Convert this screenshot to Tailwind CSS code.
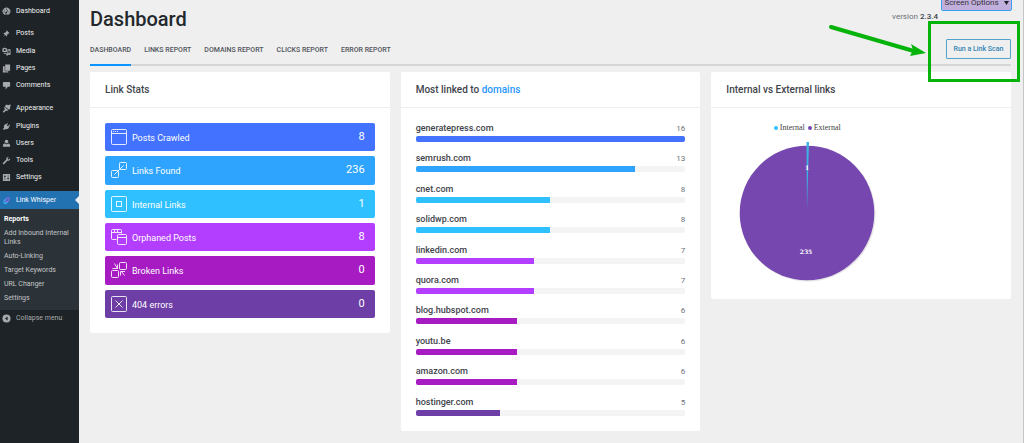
<!DOCTYPE html>
<html lang="en">
<head>
<meta charset="utf-8">
<meta name="viewport" content="width=device-width, initial-scale=1">
<title>Dashboard</title>
<script src="https://cdn.jsdelivr.net/npm/@tailwindcss/browser@4"></script>
</head>
<body class="relative flex min-h-screen overflow-x-hidden bg-[#efefef] font-['Roboto',sans-serif] text-[#3f444b]">

<aside class="w-[79px] shrink-0 bg-[#1d2327] pt-[3px] text-[7px] leading-[9px] text-[#f0f0f1]">
  <nav aria-label="Main menu">
    <ul>
      <li><a href="#" class="flex h-[17px] items-center gap-[5px] pl-[2px]">
        <svg class="size-[9px] fill-[#a7aaad]" viewBox="0 0 20 20"><path fill-rule="evenodd" d="M4 16a8.500 8.500 0 1 1 12 0c-.5.6-1 .9-1.500.9h-9C5 16.900 4.500 16.600 4 16zM9 4v2h2V4zM5 6v2h2V6zM3.500 10v2h2v-2zM14.500 10v2h2v-2zM14 5l-5 6a2 2 0 1 0 2 2z"/></svg>Dashboard</a></li>
      <li class="mt-[5px]"><a href="#" class="flex h-[17px] items-center gap-[5px] pl-[2px]">
        <svg class="size-[9px] fill-[#a7aaad]" viewBox="0 0 20 20"><path d="M10.400 3l6.500 6.500c-1 .8-2.200.9-3 .6l-2.600 2.700c.5 1.500.2 3-.7 4l-3.300-3.400L2 18l4.500-5.400-3.300-3.300c1-.9 2.500-1.200 4-.7L9.800 6c-.3-.9-.2-2.200.6-3z"/></svg>Posts</a></li>
      <li><a href="#" class="flex h-[18px] items-center gap-[5px] pl-[2px]">
        <svg class="size-[9px] fill-[#a7aaad]" viewBox="0 0 20 20"><path fill-rule="evenodd" d="M1 3h2l1-1.500h3L8 3h3v8H1zM6 4.500a2.300 2.300 0 1 0 0 4.600 2.300 2.300 0 0 0 0-4.600zM12 5h7v10.500a2.500 2.500 0 1 1-2-2.400V8h-3v8.500a2.500 2.500 0 1 1-2-2.400zM4 13h5v2H4z"/></svg>Media</a></li>
      <li><a href="#" class="flex h-[17px] items-center gap-[5px] pl-[2px]">
        <svg class="size-[9px] fill-[#a7aaad]" viewBox="0 0 20 20"><path d="M7 1h11v14H7zM2 5h4v11h8v3H2z"/></svg>Pages</a></li>
      <li><a href="#" class="flex h-[17px] items-center gap-[5px] pl-[2px]">
        <svg class="size-[9px] fill-[#a7aaad]" viewBox="0 0 20 20"><path d="M4 2h12c1 0 2 1 2 2v7c0 1-1 2-2 2h-3l-5 6v-6H4c-1 0-2-1-2-2V4c0-1 1-2 2-2z"/></svg>Comments</a></li>
      <li class="mt-[6px]"><a href="#" class="flex h-[17px] items-center gap-[5px] pl-[2px]">
        <svg class="size-[9px] fill-[#a7aaad]" viewBox="0 0 20 20"><path d="M9 2l2-1 2 2 5-2 1.500 1.500-2 5 1 2-3 3L6 5zM5.500 6l8.500 8-3 1.500-2-1-4.500 4.500c-1 .8-3.500-1.500-2.500-2.500L6.500 12l-1.500-3z"/></svg>Appearance</a></li>
      <li><a href="#" class="flex h-[18px] items-center gap-[5px] pl-[2px]">
        <svg class="size-[9px] fill-[#a7aaad]" viewBox="0 0 20 20"><path d="M13.100 4.400L10.500 7l2.500 2.500L16 6.600c1-.9 2.500.6 1.500 1.500l-3 3 1.200 1.200c-2 3-5.500 4.500-8.500 3L4.500 18 2 15.500l2.700-2.700c-1.500-3 0-6.500 3-8.500L9 5.500 11.600 3c1-1 2.500.4 1.500 1.400z"/></svg>Plugins</a></li>
      <li><a href="#" class="flex h-[17px] items-center gap-[5px] pl-[2px]">
        <svg class="size-[9px] fill-[#a7aaad]" viewBox="0 0 20 20"><circle cx="10" cy="5.500" r="4"/><path d="M2 17v-3c0-3 3-4 5-4l3 2 3-2c2 0 5 1 5 4v3z"/></svg>Users</a></li>
      <li><a href="#" class="flex h-[17px] items-center gap-[5px] pl-[2px]">
        <svg class="size-[9px] fill-[#a7aaad]" viewBox="0 0 20 20"><path d="M16.700 9.300c-1.300 1.300-3.200 1.600-4.800 1L5 17.500c-.9 1-2 1-2.700.2-.8-.8-.8-1.900.2-2.700l7.200-7c-.7-1.600-.3-3.500 1-4.700 1.200-1.300 3-1.600 4.600-1L12.500 5l.5 2.200 2.200.5 2.700-2.700c.6 1.500.1 3.100-1.200 4.300z"/></svg>Tools</a></li>
      <li><a href="#" class="flex h-[17px] items-center gap-[5px] pl-[2px]">
        <svg class="size-[9px] fill-[#a7aaad]" viewBox="0 0 20 20"><path fill-rule="evenodd" d="M2 2h16v16H2zM6 4v3H4.500v2H6v7h1V9h1.500V7H7V4zM13 4v7h-1.500v2H13v3h1v-3h1.500v-2H14V4z"/></svg>Settings</a></li>
      <li class="mt-[5px]">
        <a href="#" class="relative flex h-[18px] items-center gap-[5px] bg-[#2271b1] pl-[2px] text-white">
          <svg class="size-[9px]" viewBox="0 0 20 20" fill="none" stroke-width="2.500" stroke-linecap="round"><path stroke="#35b8f5" d="M8 7l-3 3.500c-3 4 2 8 5.500 4.500l2-2.500"/><path stroke="#8a6be0" d="M12 13l3-4c3-4-1-7-4-4L8 9c-2 3 1 5 3 3"/></svg>Link Whisper
          <span class="absolute right-0 top-[5px] border-y-4 border-r-4 border-y-transparent border-r-[#efefef]"></span>
        </a>
        <ul class="flex flex-col gap-[5px] bg-[#2c3338] px-[4px] pb-[7px] pt-[6px] text-[#c3c4c7]">
          <li><a href="#" class="block font-bold text-white">Reports</a></li>
          <li><a href="#" class="block">Add Inbound Internal Links</a></li>
          <li><a href="#" class="block">Auto-Linking</a></li>
          <li><a href="#" class="block">Target Keywords</a></li>
          <li><a href="#" class="block">URL Changer</a></li>
          <li><a href="#" class="block">Settings</a></li>
        </ul>
      </li>
    </ul>
    <button type="button" class="flex h-[17px] items-center gap-[5px] pl-[2px] text-[#a7aaad]">
      <svg class="size-[9px] fill-[#a7aaad]" viewBox="0 0 20 20"><path fill-rule="evenodd" d="M10 1a9 9 0 1 1 0 18 9 9 0 0 1 0-18zM12.500 5.500L6.500 10l6 4.500z"/></svg>Collapse menu</button>
  </nav>
</aside>

<main class="relative min-w-0 flex-1 overflow-hidden border-r border-[#c4c4c4] pb-[12px] pl-[11px] pr-[12px]">
  <button type="button" class="absolute -top-[8px] right-[11px] flex h-[19px] w-[71px] items-center justify-center gap-[5px] rounded-[2px] border border-[#3aa0f3] bg-[#c2b0dc] pt-[3px] text-[8px] leading-[8px] text-[#33303b]">Screen Options <svg class="h-[4px] w-[5px] fill-[#1d2327]" viewBox="0 0 5 4"><path d="M0 0h5L2.500 4z"/></svg></button>

  <header class="border-b-2 border-[#d6d6d6]">
    <div class="flex h-[38px] items-center justify-between">
      <h1 class="text-[20px] font-medium leading-[24px] text-[#23282d]">Dashboard</h1>
      <p class="mb-[4px] mr-[73px] text-[8px] leading-[10px] text-[#6b7076]">version <b class="font-medium text-[#3c4046]">2.3.4</b></p>
    </div>
    <div class="flex h-[26px] items-start justify-between">
      <nav aria-label="Reports" class="-mb-[2px] flex gap-[13px] self-stretch text-[7px] font-medium leading-[24px] text-[#50555c]">
        <a href="#" aria-current="page" class="border-b-2 border-[#0b93ff]">DASHBOARD</a>
        <a href="#">LINKS REPORT</a>
        <a href="#">DOMAINS REPORT</a>
        <a href="#">CLICKS REPORT</a>
        <a href="#">ERROR REPORT</a>
      </nav>
      <button type="button" class="mt-[1px] h-[20px] w-[65px] rounded-[1px] border border-[#4fa3cc] text-[7px] font-medium text-[#2f84b4]">Run a Link Scan</button>
    </div>
  </header>

  <div class="mt-[6px] grid grid-cols-3 items-start gap-[11px]">
    <section class="rounded-[2px] bg-white">
      <h2 class="border-b border-[#efefef] px-[15px] text-[10px] font-medium leading-[35px]">Link Stats</h2>
      <ul class="grid h-[225px] grid-rows-6 gap-[5px] p-[15px] text-[9px] leading-[12px] text-white">
        <li class="flex items-center gap-[5px] rounded-[2px] bg-[#4272ff] pl-[6px] pr-[10px]">
          <svg class="size-[16px]" viewBox="0 0 16 16" fill="none" stroke="#fff" stroke-opacity=".85"><rect x=".5" y=".5" width="15" height="15" rx="1"/><path d="M.5 4.500h15M2 2.500h1M4 2.500h1M6 2.500h1"/></svg>
          <span class="flex-1 pt-[2px]">Posts Crawled</span><span class="text-[11px]">8</span></li>
        <li class="flex items-center gap-[5px] rounded-[2px] bg-[#2ea4ff] pl-[6px] pr-[10px]">
          <svg class="size-[16px]" viewBox="0 0 16 16" fill="none" stroke="#fff" stroke-opacity=".85"><rect x="8.500" y=".5" width="7" height="7" rx="1"/><rect x=".5" y="8.500" width="7" height="7" rx="1"/><path d="M3.500 12.500l9-9"/></svg>
          <span class="flex-1 pt-[2px]">Links Found</span><span class="text-[11px]">236</span></li>
        <li class="flex items-center gap-[5px] rounded-[2px] bg-[#2ec0ff] pl-[6px] pr-[10px]">
          <svg class="size-[16px]" viewBox="0 0 16 16" fill="none" stroke="#fff" stroke-opacity=".85"><rect x=".5" y=".5" width="15" height="15" rx="1"/><rect x="5.500" y="5.500" width="5" height="5"/></svg>
          <span class="flex-1 pt-[2px]">Internal Links</span><span class="text-[11px]">1</span></li>
        <li class="flex items-center gap-[5px] rounded-[2px] bg-[#b33eff] pl-[6px] pr-[10px]">
          <svg class="size-[16px]" viewBox="0 0 16 16" fill="none" stroke="#fff" stroke-opacity=".85"><path d="M5.500 10.500h-4a1 1 0 0 1-1-1v-8a1 1 0 0 1 1-1h8a1 1 0 0 1 1 1v3M.5 3.500h10M3.500 1v2M6.500 1v2"/><rect x="6.500" y="5.500" width="9" height="10" rx="1"/><path d="M6.500 8.500h9"/></svg>
          <span class="flex-1 pt-[2px]">Orphaned Posts</span><span class="text-[11px]">8</span></li>
        <li class="flex items-center gap-[5px] rounded-[2px] bg-[#a61cc2] pl-[6px] pr-[10px]">
          <svg class="size-[16px]" viewBox="0 0 16 16" fill="none" stroke="#fff" stroke-opacity=".85"><rect x="8.500" y=".5" width="7" height="7" rx="1"/><rect x=".5" y="8.500" width="7" height="7" rx="1"/><path d="M3.500 1.500l3 5M6.500 2.500v4h-5M13.500 13.500l-3-4M9.500 13.500v-4h4.500"/></svg>
          <span class="flex-1 pt-[2px]">Broken Links</span><span class="text-[11px]">0</span></li>
        <li class="flex items-center gap-[5px] rounded-[2px] bg-[#6c3ea6] pl-[6px] pr-[10px]">
          <svg class="size-[16px]" viewBox="0 0 16 16" fill="none" stroke="#fff" stroke-opacity=".85"><rect x=".5" y=".5" width="15" height="15" rx="1"/><path d="M4.500 4.500l7 7M11.500 4.500l-7 7"/></svg>
          <span class="flex-1 pt-[2px]">404 errors</span><span class="text-[11px]">0</span></li>
      </ul>
    </section>

    <section class="rounded-[2px] bg-white">
      <h2 class="border-b border-[#efefef] px-[15px] text-[10px] font-medium leading-[35px]">Most linked to <a href="#" class="text-[#2a97ff]">domains</a></h2>
      <ul class="grid h-[323px] grid-rows-10 px-[15px] pb-[6px] pt-[13px] text-[9px] leading-[15px]">
        <li><div class="flex justify-between"><span class="font-medium">generatepress.com</span><span class="text-[8px] text-[#6b7076]">16</span></div><div class="h-[6px] overflow-hidden rounded-[2px] bg-[#f4f4f4]"><div class="h-full bg-[#4272ff]" style="width:100%"></div></div></li>
        <li><div class="flex justify-between"><span class="font-medium">semrush.com</span><span class="text-[8px] text-[#6b7076]">13</span></div><div class="h-[6px] overflow-hidden rounded-[2px] bg-[#f4f4f4]"><div class="h-full bg-[#2ea4ff]" style="width:81.25%"></div></div></li>
        <li><div class="flex justify-between"><span class="font-medium">cnet.com</span><span class="text-[8px] text-[#6b7076]">8</span></div><div class="h-[6px] overflow-hidden rounded-[2px] bg-[#f4f4f4]"><div class="h-full bg-[#2ec0ff]" style="width:50%"></div></div></li>
        <li><div class="flex justify-between"><span class="font-medium">solidwp.com</span><span class="text-[8px] text-[#6b7076]">8</span></div><div class="h-[6px] overflow-hidden rounded-[2px] bg-[#f4f4f4]"><div class="h-full bg-[#2ec0ff]" style="width:50%"></div></div></li>
        <li><div class="flex justify-between"><span class="font-medium">linkedin.com</span><span class="text-[8px] text-[#6b7076]">7</span></div><div class="h-[6px] overflow-hidden rounded-[2px] bg-[#f4f4f4]"><div class="h-full bg-[#b33eff]" style="width:43.75%"></div></div></li>
        <li><div class="flex justify-between"><span class="font-medium">quora.com</span><span class="text-[8px] text-[#6b7076]">7</span></div><div class="h-[6px] overflow-hidden rounded-[2px] bg-[#f4f4f4]"><div class="h-full bg-[#b33eff]" style="width:43.75%"></div></div></li>
        <li><div class="flex justify-between"><span class="font-medium">blog.hubspot.com</span><span class="text-[8px] text-[#6b7076]">6</span></div><div class="h-[6px] overflow-hidden rounded-[2px] bg-[#f4f4f4]"><div class="h-full bg-[#a61cc2]" style="width:37.5%"></div></div></li>
        <li><div class="flex justify-between"><span class="font-medium">youtu.be</span><span class="text-[8px] text-[#6b7076]">6</span></div><div class="h-[6px] overflow-hidden rounded-[2px] bg-[#f4f4f4]"><div class="h-full bg-[#a61cc2]" style="width:37.5%"></div></div></li>
        <li><div class="flex justify-between"><span class="font-medium">amazon.com</span><span class="text-[8px] text-[#6b7076]">6</span></div><div class="h-[6px] overflow-hidden rounded-[2px] bg-[#f4f4f4]"><div class="h-full bg-[#a61cc2]" style="width:37.5%"></div></div></li>
        <li><div class="flex justify-between"><span class="font-medium">hostinger.com</span><span class="text-[8px] text-[#6b7076]">5</span></div><div class="h-[6px] overflow-hidden rounded-[2px] bg-[#f4f4f4]"><div class="h-full bg-[#6c3ea6]" style="width:31.25%"></div></div></li>
      </ul>
    </section>

    <section class="rounded-[2px] bg-white">
      <h2 class="border-b border-[#efefef] px-[15px] text-[10px] font-medium leading-[35px]">Internal vs External links</h2>
      <div class="flex w-[192px] flex-col items-center pb-[17px] pt-[15px]">
        <div class="flex gap-[3px] font-['Liberation_Serif',serif] text-[8px] leading-[10px] text-[#444]">
          <span class="flex items-center gap-[2px]"><span class="size-[4px] rounded-full bg-[#2ec0ff]"></span>Internal</span>
          <span class="flex items-center gap-[2px]"><span class="size-[4px] rounded-full bg-[#7647ae]"></span>External</span>
        </div>
        <svg class="mt-[9px] h-[140px] w-[140px] font-['DejaVu_Serif',serif] text-[6px] font-bold" viewBox="0 0 140 140" role="img" aria-label="Internal 1, External 235">
          <circle cx="71" cy="72" r="67.500" fill="#000" fill-opacity=".1"/>
          <circle cx="70" cy="71" r="67.300" fill="#7647ae"/>
          <path d="M70 68L69.500 0h2.500z" fill="#3fb2e4"/>
          <g fill="#fff" text-anchor="middle"><text x="70" y="28">1</text><text x="69" y="112">235</text></g>
        </svg>
      </div>
    </section>
  </div>

  <svg class="pointer-events-none absolute right-0 top-0 h-[90px] w-[203px]" viewBox="0 0 203 90" fill="none" stroke="#06b30b" aria-hidden="true">
    <rect x="109.500" y="22.500" width="89" height="58" stroke-width="3"/>
    <path d="M11 27L92 50.500" stroke-width="4" stroke-linecap="round"/>
    <path d="M106 53L91 44l2 6-3 6z" fill="#06b30b" stroke="none"/>
  </svg>
</main>
</body>
</html>
